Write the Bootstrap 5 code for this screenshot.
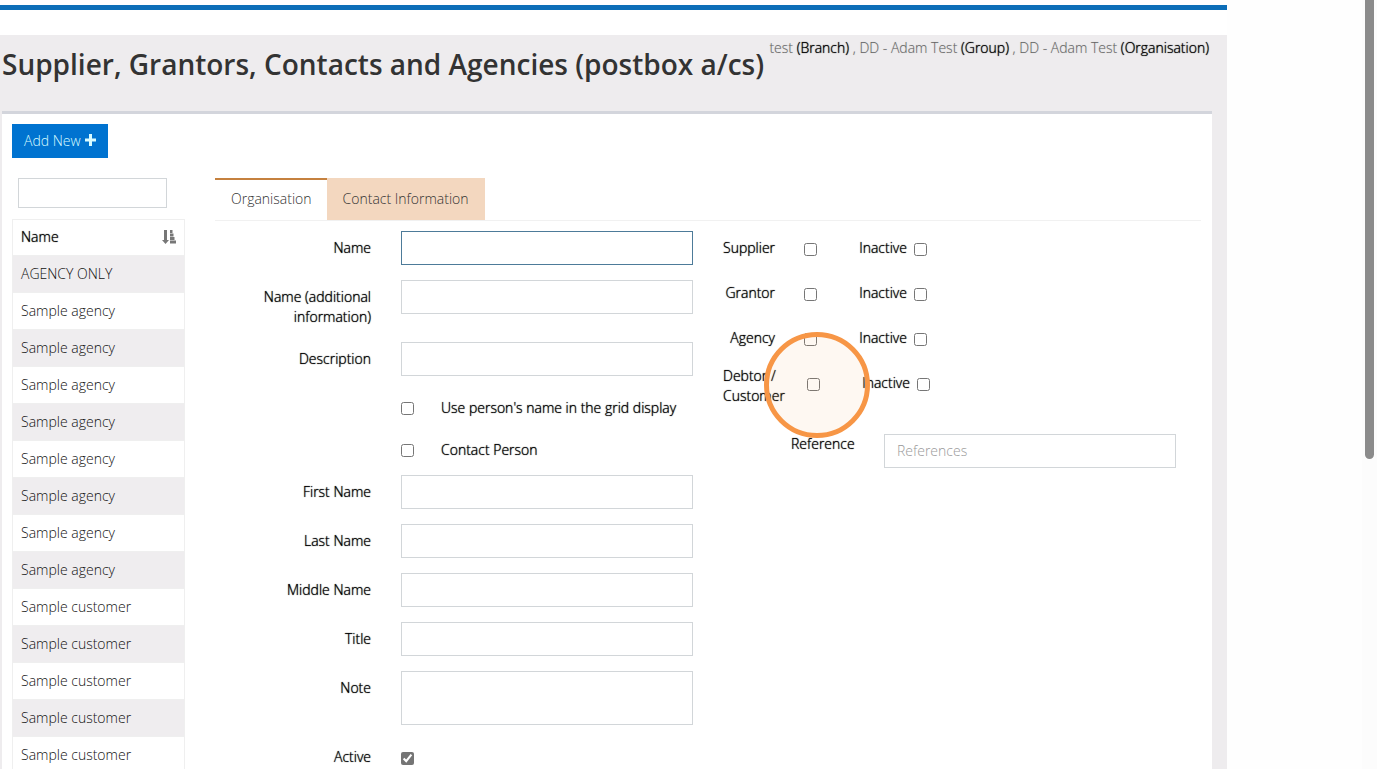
<!DOCTYPE html>
<html lang="en">
<head>
<meta charset="utf-8">
<meta name="viewport" content="width=device-width, initial-scale=1">
<title>Supplier, Grantors, Contacts and Agencies</title>
<link href="https://cdn.jsdelivr.net/npm/bootstrap@5.3.0/dist/css/bootstrap.min.css" rel="stylesheet">
<style>
  body { font-family: "Open Sans", sans-serif; font-size: 14px; line-height: 20px; font-weight: 300; color: #000; background: #fefefe; }
  .app-shell { background: #fff; min-width: 0; }
  .brand-line { height: 5px; margin: 5px 0 25px; background: #0d6eb8; }
  .page-area { background: #eeecee; padding: 0 15px 0 2px; }
  .page-head { height: 76px; padding: 3px 3px 0 0; }
  .page-head h1 { font-size: 28px; line-height: 36px; font-weight: 600; color: #333; margin: 8px 0 0; }
  .context-path { color: #666; text-shadow: 0 0 1px #bbb; }
  .context-path b, .field-label, .grid-list th { font-weight: 300; color: #000; text-shadow: 0 0 1px #000; }
  .work-panel { background: #fff; border-top: 3px solid #d3d5dc; padding: 10px 11px 10px 10px; min-height: 700px; }
  .btn-add { background: #0073d0; color: #d9fbff; border-radius: 0; border: 0; height: 34px; padding: 0 12px 2px; font-size: 14px; font-weight: 300; }
  .work-grid { display: grid; grid-template-columns: 173px minmax(0, 1fr); column-gap: 30px; margin-top: 20px; }
  .form-control { border: 1px solid #d2d6d9; border-radius: 0; height: 34px; padding: 5px 12px 7px; font-size: 14px; line-height: 20px; font-weight: 300; box-shadow: none; }
  .form-control::placeholder { color: #999; }
  .form-control.is-current { border-color: #4d7b99; }
  textarea.form-control { height: 54px; resize: none; }
  .list-filter { width: 149px; height: 30px; margin: 0 6px 11px; }
  .grid-list { border: 1px solid #efefef; font-size: 14px; margin: 0; }
  .grid-list th, .grid-list td { padding: 8px; border: 0; line-height: 20px; }
  .grid-list th { height: 35px; padding: 7px 8px 8px; }
  .grid-list tbody tr { border-top: 1px solid #efefef; }
  .grid-list tbody td { height: 36px; color: #111; }
  .grid-list tbody tr:nth-child(odd) td { background: #efedef; }
  .tab-row { border-bottom: 1px solid #f1f1f1; }
  .tab-row .nav-link { border: 0; border-top: 2px solid #f3d7bf; border-radius: 0; margin: 0; padding: 9px 16px 11px; background: #f3d7bf; color: #333; }
  .tab-row .nav-link.active { background: #fff; border-top-color: #c5813f; color: #333; padding-right: 15px; }
  .form-halves { display: grid; grid-template-columns: 1fr 1fr; padding-top: 10px; }
  .field-row { display: grid; grid-template-columns: 171px minmax(0, 1fr); margin-bottom: 15px; padding-right: 15px; }
  .field-row .field-label { text-align: right; padding: 7px 15px 0 0; }
  .check-row { display: flex; align-items: center; height: 34px; margin: 0 0 8px 186px; }
  .field-row .field-body { padding-left: 15px; }
  .field-row .tick-body { display: flex; align-items: flex-end; padding-bottom: 2px; }
  input[type=checkbox] { width: 13px; height: 13px; margin: 0; accent-color: #757575; flex: none; }
  .check-row input { margin-right: 27px; }
  .role-row { display: flex; min-height: 34px; margin: 0 0 11px 15px; }
  .role-row > * { margin-top: 7px; }
  .role-row .field-label { width: 52px; text-align: right; white-space: nowrap; }
  .role-row .box-wrap { position: relative; height: 13px; margin: 12px 42px 0 29px; display: flex; }
  .role-row input.off-box { margin: 12px 0 0 7px; }
  .role-row.is-debtor { margin-bottom: 28px; }
  .role-row.is-debtor .field-label:first-child { width: 62px; margin-top: 0; text-align: left; white-space: normal; }
  .role-row.is-debtor .box-wrap { margin-left: 22px; }
  .role-row .off-label { width: 48px; }
  .click-ring { position: absolute; left: -43px; top: -46px; width: 106px; height: 106px; border: 5px solid #f79646; border-radius: 50%; background: rgba(247, 150, 70, .07); pointer-events: none; }
  .ref-row { display: flex; padding: 0 25px 0 83px; }
  .ref-row label { width: 93px; flex: none; }
  .side-gutter { width: 135px; flex: none; }
  .scroll-track { width: 15px; flex: none; background: #fcfcfc; padding-left: 3px; }
  .scroll-thumb { width: 9px; height: 459px; background: #8b8b8b; border-radius: 0 0 5px 5px; }
</style>
</head>
<body>
<div class="d-flex vh-100 overflow-hidden">
  <main class="app-shell flex-grow-1">
    <div class="brand-line"></div>
    <div class="page-area">
      <header class="page-head d-flex justify-content-between align-items-start">
        <h1 class="text-nowrap">Supplier, Grantors, Contacts and Agencies (postbox a/cs)</h1>
        <div class="context-path text-nowrap">test <b>(Branch)</b> , DD - Adam Test <b>(Group)</b> , DD - Adam Test <b>(Organisation)</b></div>
      </header>
      <section class="work-panel">
        <button type="button" class="btn btn-add d-inline-flex align-items-center">Add New
          <svg class="ms-1" width="11" height="12" viewBox="0 0 11 12" aria-hidden="true"><path fill="#d9fbff" d="M4 0h3v4.500h4v3H7V12H4V7.500H0v-3h4z"/></svg>
        </button>
        <div class="work-grid">
          <aside>
            <input type="text" class="form-control list-filter" aria-label="Filter names">
            <table class="table grid-list">
              <thead><tr><th scope="col"><div class="d-flex justify-content-between align-items-center">Name
                <svg width="14" height="14" viewBox="0 0 14 14" fill="#777" aria-hidden="true"><path d="M2 0h3v10H7L3.500 14 0 10h2zM8 0h2.500v3H8zM8 3.500h3.500v3H8zM8 7h4.500v3H8zM8 10.500H14v3H8z"/></svg></div></th></tr></thead>
              <tbody>
                <tr><td>AGENCY ONLY</td></tr>
                <tr><td>Sample agency</td></tr>
                <tr><td>Sample agency</td></tr>
                <tr><td>Sample agency</td></tr>
                <tr><td>Sample agency</td></tr>
                <tr><td>Sample agency</td></tr>
                <tr><td>Sample agency</td></tr>
                <tr><td>Sample agency</td></tr>
                <tr><td>Sample agency</td></tr>
                <tr><td>Sample customer</td></tr>
                <tr><td>Sample customer</td></tr>
                <tr><td>Sample customer</td></tr>
                <tr><td>Sample customer</td></tr>
                <tr><td>Sample customer</td></tr>
              </tbody>
            </table>
          </aside>
          <div>
            <nav class="nav nav-tabs tab-row">
              <a class="nav-link active" href="#organisation" aria-current="page">Organisation</a>
              <a class="nav-link" href="#contact">Contact Information</a>
            </nav>
            <form class="form-halves" id="organisation">
              <div>
                <div class="field-row"><label class="field-label" for="name">Name</label><div class="field-body"><input id="name" class="form-control is-current" type="text"></div></div>
                <div class="field-row"><label class="field-label" for="name2">Name (additional information)</label><div class="field-body"><input id="name2" class="form-control" type="text"></div></div>
                <div class="field-row"><label class="field-label" for="desc">Description</label><div class="field-body"><input id="desc" class="form-control" type="text"></div></div>
                <div class="check-row"><input type="checkbox" id="usename"><label class="field-label" for="usename">Use person's name in the grid display</label></div>
                <div class="check-row"><input type="checkbox" id="person"><label class="field-label" for="person">Contact Person</label></div>
                <div class="field-row"><label class="field-label" for="first">First Name</label><div class="field-body"><input id="first" class="form-control" type="text"></div></div>
                <div class="field-row"><label class="field-label" for="last">Last Name</label><div class="field-body"><input id="last" class="form-control" type="text"></div></div>
                <div class="field-row"><label class="field-label" for="middle">Middle Name</label><div class="field-body"><input id="middle" class="form-control" type="text"></div></div>
                <div class="field-row"><label class="field-label" for="title">Title</label><div class="field-body"><input id="title" class="form-control" type="text"></div></div>
                <div class="field-row"><label class="field-label" for="note">Note</label><div class="field-body"><textarea id="note" class="form-control"></textarea></div></div>
                <div class="field-row"><label class="field-label" for="active">Active</label><div class="field-body tick-body"><input id="active" type="checkbox" checked></div></div>
              </div>
              <div>
                <div class="role-row"><label class="field-label" for="supplier">Supplier</label><span class="box-wrap"><input type="checkbox" id="supplier"></span><label class="field-label off-label" for="supplier-off">Inactive</label><input class="off-box" type="checkbox" id="supplier-off"></div>
                <div class="role-row"><label class="field-label" for="grantor">Grantor</label><span class="box-wrap"><input type="checkbox" id="grantor"></span><label class="field-label off-label" for="grantor-off">Inactive</label><input class="off-box" type="checkbox" id="grantor-off"></div>
                <div class="role-row"><label class="field-label" for="agency">Agency</label><span class="box-wrap"><input type="checkbox" id="agency"></span><label class="field-label off-label" for="agency-off">Inactive</label><input class="off-box" type="checkbox" id="agency-off"></div>
                <div class="role-row is-debtor"><label class="field-label" for="debtor">Debtor / Customer</label><span class="box-wrap"><input type="checkbox" id="debtor"><span class="click-ring"></span></span><label class="field-label off-label" for="debtor-off">Inactive</label><input class="off-box" type="checkbox" id="debtor-off"></div>
                <div class="ref-row"><label class="field-label" for="reference">Reference</label><input id="reference" class="form-control" type="text" placeholder="References"></div>
              </div>
            </form>
          </div>
        </div>
      </section>
    </div>
  </main>
  <div class="side-gutter"></div>
  <div class="scroll-track"><div class="scroll-thumb"></div></div>
</div>
<script src="https://cdn.jsdelivr.net/npm/bootstrap@5.3.0/dist/js/bootstrap.bundle.min.js"></script>
</body>
</html>
